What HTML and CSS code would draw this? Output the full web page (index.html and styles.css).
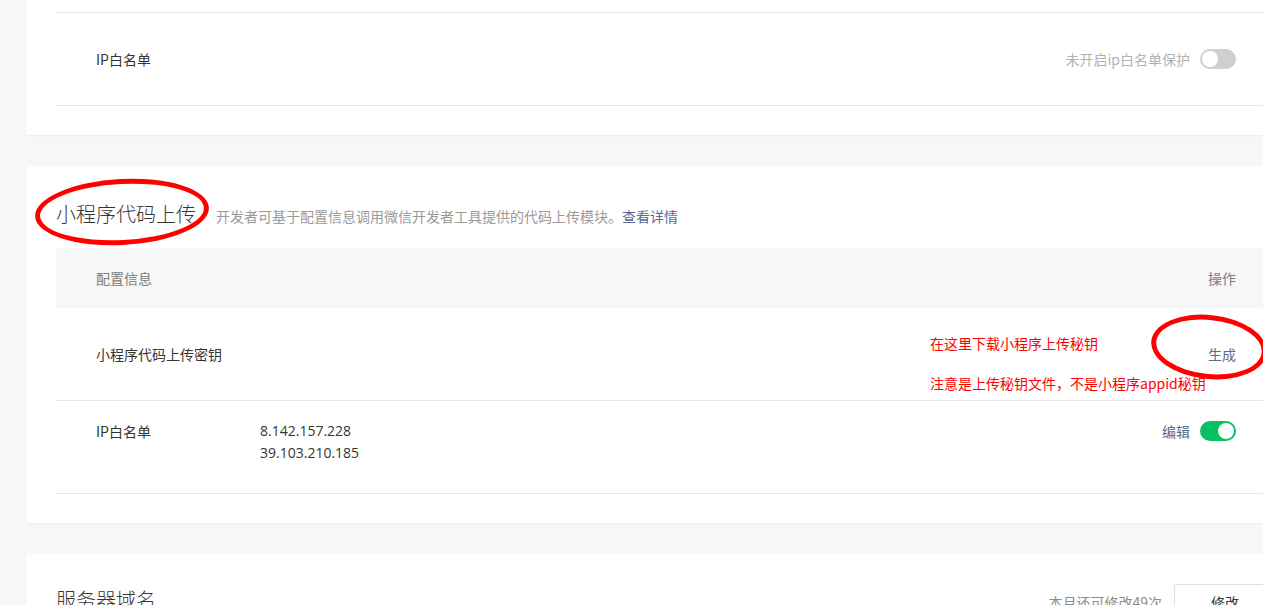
FILE: index.html
```html
<!DOCTYPE html>
<html lang="zh-CN">
<head>
<meta charset="utf-8">
<title>开发设置</title>
<link rel="stylesheet" href="styles.css">
</head>
<body>
<div class="page">
  <section class="card card-first">
    <div class="row row-hidden"></div>
    <div class="row">
      <div class="cell-label">IP白名单</div>
      <div class="cell-fill"></div>
      <div class="cell-ops">
        <span class="muted">未开启ip白名单保护</span>
        <span class="switch"><span class="knob"></span></span>
      </div>
    </div>
  </section>

  <section class="card">
    <div class="card-head">
      <h2 class="card-title">小程序代码上传</h2>
      <p class="card-desc">开发者可基于配置信息调用微信开发者工具提供的代码上传模块。<a class="link" href="#">查看详情</a></p>
    </div>
    <div class="table-head">
      <div class="cell-label">配置信息</div>
      <div class="cell-fill"></div>
      <div class="cell-ops">操作</div>
    </div>
    <div class="row">
      <div class="cell-label">小程序代码上传密钥</div>
      <div class="cell-fill"></div>
      <div class="cell-ops"><a class="link" href="#">生成</a></div>
    </div>
    <div class="row row-top">
      <div class="cell-label">IP白名单</div>
      <div class="cell-fill ips">
        <div>8.142.157.228</div>
        <div>39.103.210.185</div>
      </div>
      <div class="cell-ops">
        <a class="link" href="#">编辑</a>
        <span class="switch on"><span class="knob"></span></span>
      </div>
    </div>
  </section>

  <section class="card card-last">
    <div class="card-head split">
      <h2 class="card-title">服务器域名</h2>
      <div class="head-ops">
        <span class="muted-dark">本月还可修改49次</span>
        <button class="btn">修改</button>
      </div>
    </div>
  </section>

  <div class="mark mark-title"></div>
  <div class="mark mark-gen"></div>
  <div class="note note-1">在这里下载小程序上传秘钥</div>
  <div class="note note-2">注意是上传秘钥文件，不是小程序appid秘钥</div>
</div>
</body>
</html>
```

FILE: styles.css
```css
html, body {
  margin: 0;
  padding: 0;
}
body {
  background: #f6f7f9;
  overflow: hidden;
  font-family: "Noto Sans CJK SC", "Microsoft YaHei", sans-serif;
  font-size: 14px;
  color: #353535;
}
.page {
  position: relative;
  margin-top: -80px;
  padding-left: 26px;
  width: 1280px;
}
.card {
  background: #fff;
  border-radius: 4px;
  padding: 30px 30px 29px;
  margin-bottom: 31px;
  box-shadow: 0 1px 2px rgba(0,0,0,0.05);
}
.card-first {
  padding-top: 0;
}
.card-last {
  padding-top: 28px;
}
.row, .table-head {
  display: flex;
  align-items: center;
  padding: 20px 40px;
  min-height: 52px;
  border-bottom: 1px solid #e7e7eb;
  line-height: 22px;
}
.row-hidden {
  padding: 0;
  height: 92px;
  min-height: 0;
}
.row-top {
  align-items: flex-start;
  padding-top: 19px;
  padding-bottom: 21px;
}
.table-head {
  background: #f6f7f9;
  border-bottom: none;
  min-height: 0;
  height: 60px;
  padding: 0 40px;
  box-sizing: border-box;
  color: #7d7d7d;
}
.cell-label {
  width: 164px;
  flex: none;
}
.cell-fill {
  flex: 1;
  color: #353535;
}
.ips {
  font-family: "Open Sans", "Noto Sans CJK SC", sans-serif;
  font-size: 14px;
}
.cell-ops {
  display: flex;
  align-items: center;
  gap: 10px;
}
.muted {
  color: #b2b2b2;
}
.muted-dark {
  color: #8d8d8d;
}
.link {
  color: #576b95;
  text-decoration: none;
}
.switch {
  display: inline-flex;
  align-items: center;
  width: 36px;
  height: 20px;
  border-radius: 10px;
  background: #cfcfcf;
  padding: 2px;
  box-sizing: border-box;
}
.switch .knob {
  width: 16px;
  height: 16px;
  border-radius: 50%;
  background: #fff;
}
.switch.on {
  background: #07c160;
  justify-content: flex-end;
}
.card-head {
  display: flex;
  align-items: baseline;
  height: 36px;
  margin-bottom: 16px;
}
.card-title {
  margin: 0;
  font-size: 20px;
  font-weight: 300;
  line-height: 36px;
  color: #353535;
}
.card-desc {
  margin: 0 0 0 20px;
  font-size: 14px;
  color: #9a9a9a;
}
.split {
  justify-content: space-between;
  align-items: center;
  margin-bottom: 0;
}
.head-ops {
  display: flex;
  align-items: center;
  gap: 12px;
  padding-top: 4px;
}
.btn {
  font-family: inherit;
  font-size: 14px;
  color: #353535;
  background: #fff;
  border: 1px solid #e0e0e0;
  border-radius: 3px;
  width: 102px;
  height: 36px;
}
.mark {
  position: absolute;
  border: 5px solid #ff0000;
  border-radius: 50%;
  box-sizing: border-box;
}
.mark-title {
  left: 35px;
  top: 259px;
  width: 174px;
  height: 66px;
  transform: rotate(-3deg);
}
.mark-gen {
  left: 1151px;
  top: 395px;
  width: 116px;
  height: 64px;
  transform: rotate(6deg);
}
.note {
  position: absolute;
  left: 930px;
  color: #ff0000;
  font-size: 14px;
  line-height: 18px;
  white-space: nowrap;
}
.note-1 { top: 414px; }
.note-2 { top: 454px; }
```
